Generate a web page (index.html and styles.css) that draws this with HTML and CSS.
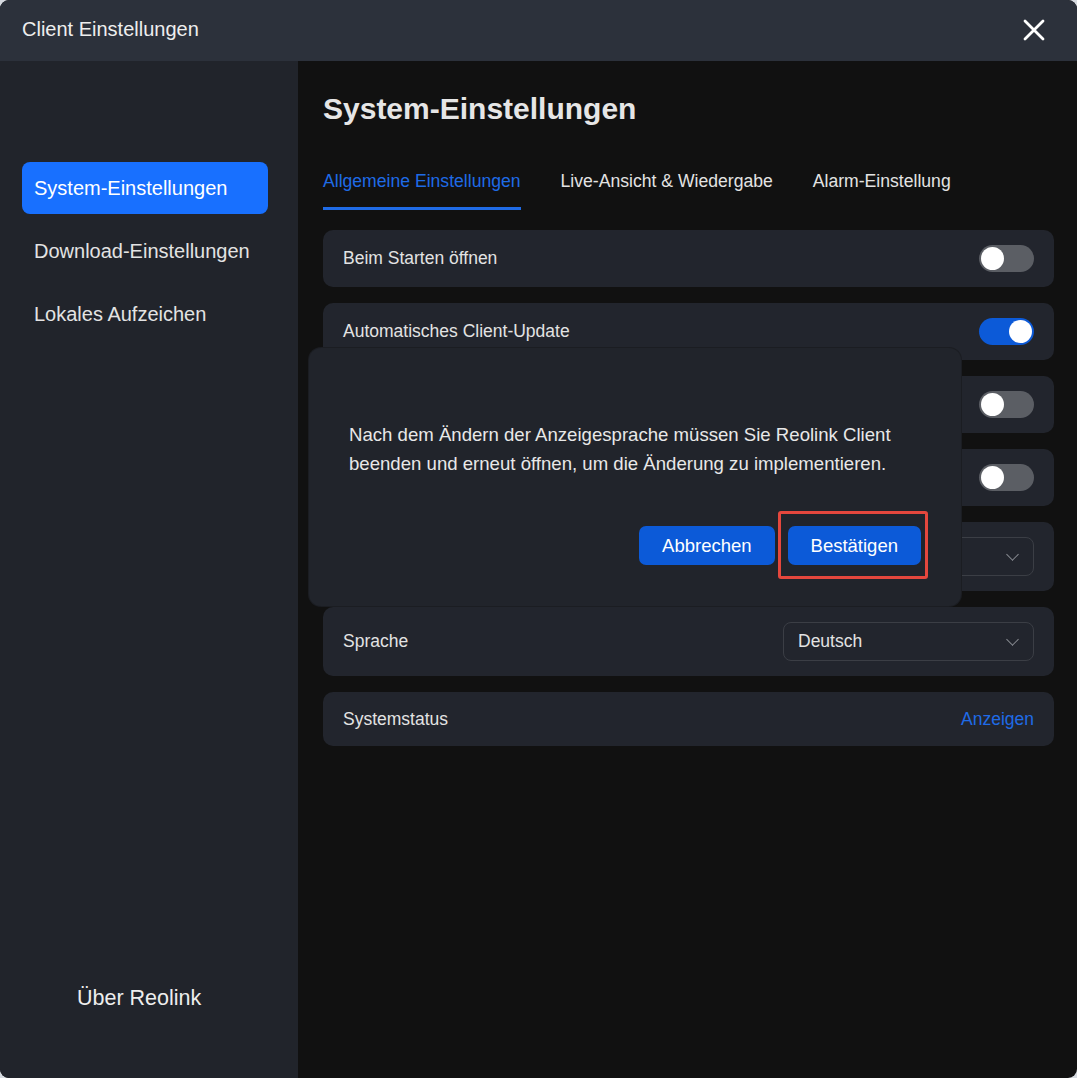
FILE: index.html
```html
<!DOCTYPE html>
<html lang="de">
<head>
  <meta charset="UTF-8">
  <title>Client Einstellungen</title>
  <link rel="stylesheet" href="styles.css">
</head>
<body>

<div class="window">
  <header class="titlebar">
    <span class="titlebar-text">Client Einstellungen</span>
    <button class="close-btn" aria-label="Schließen">
      <svg width="22" height="22" viewBox="0 0 22 22">
        <path d="M2 2 L20 20 M20 2 L2 20" stroke="#ffffff" stroke-width="2.8" stroke-linecap="round"/>
      </svg>
    </button>
  </header>

  <aside class="sidebar">
    <nav class="menu">
      <a class="menu-item active">System-Einstellungen</a>
      <a class="menu-item">Download-Einstellungen</a>
      <a class="menu-item">Lokales Aufzeichen</a>
    </nav>
    <a class="about">Über Reolink</a>
  </aside>

  <main class="content">
    <h1 class="page-title">System-Einstellungen</h1>

    <div class="tabs">
      <span class="tab active">Allgemeine Einstellungen</span>
      <span class="tab">Live-Ansicht &amp; Wiedergabe</span>
      <span class="tab">Alarm-Einstellung</span>
    </div>

    <div class="rows">
      <div class="row">
        <span class="label">Beim Starten öffnen</span>
        <span class="toggle"></span>
      </div>
      <div class="row">
        <span class="label">Automatisches Client-Update</span>
        <span class="toggle on"></span>
      </div>
      <!-- rows hidden behind the dialog -->
      <div class="row">
        <span class="label"></span>
        <span class="toggle"></span>
      </div>
      <div class="row">
        <span class="label"></span>
        <span class="toggle"></span>
      </div>
      <div class="row tall">
        <span class="label"></span>
        <div class="select"><span></span><i class="chevron"></i></div>
      </div>
      <div class="row tall">
        <span class="label">Sprache</span>
        <div class="select"><span>Deutsch</span><i class="chevron"></i></div>
      </div>
      <div class="row short">
        <span class="label">Systemstatus</span>
        <a class="link">Anzeigen</a>
      </div>
    </div>

    <div class="dialog">
      <p class="dialog-text">Nach dem Ändern der Anzeigesprache müssen Sie Reolink Client<br>beenden und erneut öffnen, um die Änderung zu implementieren.</p>
      <div class="dialog-actions">
        <button class="btn">Abbrechen</button>
        <button class="btn highlighted">Bestätigen</button>
      </div>
    </div>
  </main>
</div>

</body>
</html>
```

FILE: styles.css
```css
body {
  margin: 0;
  background: #d6dae0;
  font-family: "Liberation Sans", Arial, sans-serif;
}

.window {
  width: 1077px;
  height: 1078px;
  display: grid;
  grid-template-columns: 298px 1fr;
  grid-template-rows: 61px 1fr;
  border-radius: 9px;
  overflow: hidden;
  background: #111111;
}

.titlebar {
  grid-column: 1 / 3;
  background: #2c313b;
  display: flex;
  align-items: center;
  justify-content: space-between;
  padding: 0 32px 0 22px;
}

.titlebar-text {
  color: #eeeeee;
  font-size: 20px;
  margin-top: -2px;
}

.close-btn {
  background: none;
  border: none;
  padding: 0;
  width: 22px;
  height: 22px;
  margin-top: -1px;
  cursor: pointer;
}

.sidebar {
  background: #21242b;
  display: flex;
  flex-direction: column;
  padding: 101px 30px 68px 22px;
}

.menu {
  display: flex;
  flex-direction: column;
  gap: 11px;
}

.menu-item {
  height: 52px;
  border-radius: 8px;
  padding-left: 12px;
  display: flex;
  align-items: center;
  font-size: 20px;
  color: #e3e3e3;
}

.menu-item.active {
  background: #1870ff;
  color: #ffffff;
}

.about {
  margin-top: auto;
  padding-left: 55px;
  font-size: 21.5px;
  line-height: 24px;
  color: #eeeeee;
}

.content {
  position: relative;
  padding: 31px 23px 0 25px;
}

.page-title {
  margin: 0;
  font-size: 30px;
  line-height: 34px;
  font-weight: bold;
  color: #e6e6e6;
}

.tabs {
  display: flex;
  gap: 40px;
  margin-top: 45px;
}

.tab {
  font-size: 17.6px;
  line-height: 20px;
  color: #e3e3e3;
  padding-bottom: 16px;
  border-bottom: 3px solid transparent;
}

.tab.active {
  color: #1f6be6;
  border-bottom-color: #1f6be6;
}

.rows {
  display: flex;
  flex-direction: column;
  gap: 16px;
  margin-top: 20px;
}

.row {
  height: 57px;
  background: #22252d;
  border-radius: 10px;
  padding: 0 20px;
  display: flex;
  align-items: center;
  justify-content: space-between;
}

.row.tall {
  height: 69px;
}

.row.short {
  height: 54px;
}

.label {
  font-size: 17.5px;
  color: #e3e3e3;
}

.toggle {
  position: relative;
  width: 55px;
  height: 27px;
  border-radius: 14px;
  background: #5b5e64;
}

.toggle::after {
  content: "";
  position: absolute;
  top: 2px;
  left: 2px;
  width: 23px;
  height: 23px;
  border-radius: 50%;
  background: #ffffff;
}

.toggle.on {
  background: #0c5ad8;
}

.toggle.on::after {
  left: 30px;
}

.select {
  width: 251px;
  height: 39px;
  box-sizing: border-box;
  border: 1px solid #3b3e45;
  border-radius: 8px;
  padding: 0 14px;
  display: flex;
  align-items: center;
  justify-content: space-between;
  font-size: 17.5px;
  color: #e3e3e3;
}

.chevron {
  width: 8px;
  height: 8px;
  border-right: 1px solid #8a8d93;
  border-bottom: 1px solid #8a8d93;
  transform: rotate(45deg);
  margin: -5px 2px 0 0;
}

.link {
  font-size: 17.5px;
  color: #1f6be6;
}

.dialog {
  position: absolute;
  left: 11px;
  top: 287px;
  width: 652px;
  height: 258px;
  box-sizing: border-box;
  background: #21242b;
  border-radius: 12px;
  padding: 72px 40px 0 40px;
  box-shadow: 0 0 0 1px #1b1d22;
}

.dialog-text {
  margin: 0;
  font-size: 18.6px;
  line-height: 29px;
  color: #e8e8e8;
}

.dialog-actions {
  display: flex;
  justify-content: flex-end;
  gap: 13px;
  margin-top: 48px;
}

.btn {
  position: relative;
  height: 39px;
  padding: 0 23px;
  border: none;
  border-radius: 7px;
  background: #0c5ad8;
  color: #ffffff;
  font-family: "Liberation Sans", Arial, sans-serif;
  font-size: 18.5px;
}

.btn.highlighted::after {
  content: "";
  position: absolute;
  top: -15px;
  right: -7px;
  bottom: -14px;
  left: -10px;
  border: 3px solid #e5473d;
  border-radius: 3px;
}
```
